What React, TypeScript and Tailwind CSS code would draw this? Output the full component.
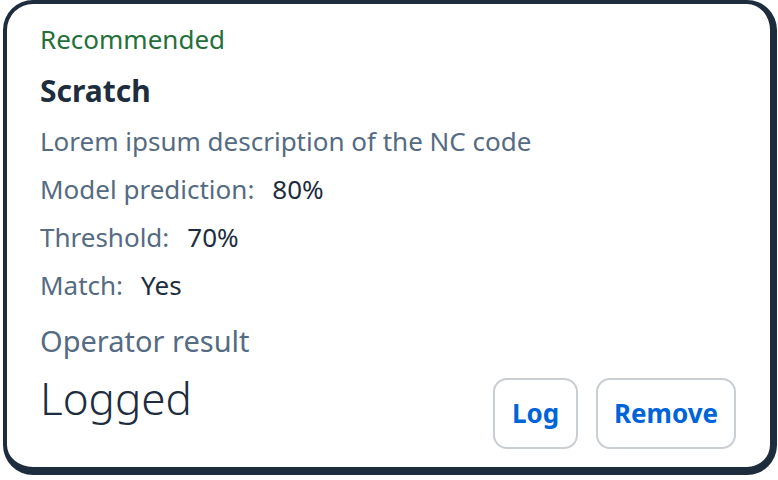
const font = { fontFamily: '"Noto Sans", "Open Sans", sans-serif' };

function Row({ label, value }: { label: string; value: string }) {
  return (
    <div className="flex gap-[18px] text-[26px] leading-[48px]">
      <span className="text-[#556b82]">{label}</span>
      <span className="text-[#1d2d3e]">{value}</span>
    </div>
  );
}

export default function App() {
  return (
    <div className="w-[778px] h-[480px] bg-white pl-[3px] pr-[1px] pb-[5px]" style={font}>
      <div className="h-full border-[4px] border-r-[7px] border-b-[8px] border-[#1d2d3e] rounded-[30px] bg-white pt-[11px] pl-[33px] pr-[34px] flex flex-col">
        <div className="text-[26px] leading-[48px] text-[#256f3a]">Recommended</div>
        <div className="mt-[4px] text-[30px] leading-[48px] font-bold text-[#1d2d3e]">Scratch</div>
        <div className="mt-[2px] text-[26px] leading-[48px] text-[#556b82]">
          Lorem ipsum description of the NC code
        </div>
        <Row label="Model prediction:" value="80%" />
        <Row label="Threshold:" value="70%" />
        <Row label="Match:" value="Yes" />
        <div className="flex justify-between items-start mt-[8px]">
          <div className="flex flex-col">
            <div className="text-[29px] leading-[48px] text-[#556b82]">Operator result</div>
            <div className="mt-[5px] text-[44px] leading-[56px] font-light text-[#1d2d3e]">Logged</div>
          </div>
          <div className="flex gap-[18px] mt-[61px]">
            <button className="w-[85px] h-[71px] rounded-[14px] border-2 border-[#c9ced3] text-[#0064d9] text-[26px] font-bold">
              Log
            </button>
            <button className="w-[140px] h-[71px] rounded-[14px] border-2 border-[#c9ced3] text-[#0064d9] text-[26px] font-bold">
              Remove
            </button>
          </div>
        </div>
      </div>
    </div>
  );
}
